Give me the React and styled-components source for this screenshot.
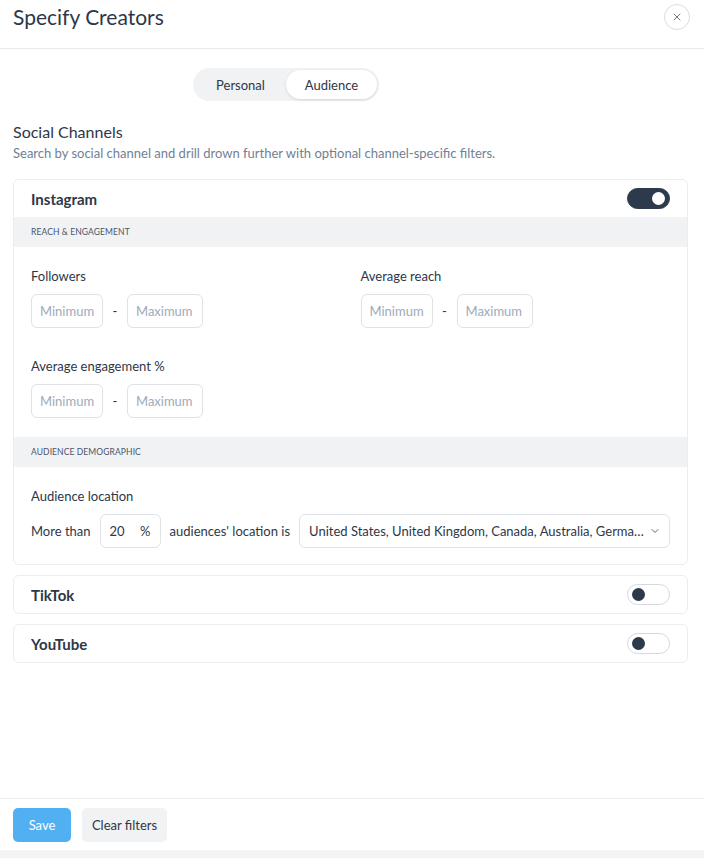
import React, { useState } from "react";
import styled, { createGlobalStyle } from "styled-components";
import { X, ChevronDown } from "lucide-react";

const GlobalStyle = createGlobalStyle`
  * { box-sizing: border-box; }
  html, body {
    margin: 0;
    padding: 0;
    background: #f3f4f5;
  }
  body {
    font-family: "Lato", "Noto Sans", sans-serif;
    color: #2d3748;
  }
`;

const channels = [
  { name: "Instagram", enabled: true },
  { name: "TikTok", enabled: false },
  { name: "YouTube", enabled: false },
];

const RangeField = ({ label }) => (
  <Field>
    <FieldLabel>{label}</FieldLabel>
    <RangeRow>
      <TextInput placeholder="Minimum" $width={72} />
      <Dash>-</Dash>
      <TextInput placeholder="Maximum" $width={76} />
    </RangeRow>
  </Field>
);

const Toggle = ({ on, onClick }) => (
  <Switch $on={on} onClick={onClick}>
    <Knob $on={on} />
  </Switch>
);

const App = () => {
  const [tab, setTab] = useState("Audience");
  const [state, setState] = useState(channels);

  const flip = (name) =>
    setState((list) =>
      list.map((c) => (c.name === name ? { ...c, enabled: !c.enabled } : c))
    );

  return (
    <>
      <GlobalStyle />
      <Modal>
        <Header>
          <Title>Specify Creators</Title>
          <CloseButton>
            <X size={12} strokeWidth={1.6} />
          </CloseButton>
        </Header>

        <Content>
          <TabsWrap>
            <Tabs>
              {["Personal", "Audience"].map((t) => (
                <Tab key={t} $active={tab === t} onClick={() => setTab(t)}>
                  {t}
                </Tab>
              ))}
            </Tabs>
          </TabsWrap>

          <SectionTitle>Social Channels</SectionTitle>
          <SectionText>
            Search by social channel and drill drown further with optional
            channel-specific filters.
          </SectionText>

          <Cards>
            {state.map((c) => (
              <Card key={c.name}>
                <CardHead>
                  <ChannelName>{c.name}</ChannelName>
                  <Toggle on={c.enabled} onClick={() => flip(c.name)} />
                </CardHead>
                {c.enabled && (
                  <>
                    <GroupHead>Reach &amp; Engagement</GroupHead>
                    <GroupBody>
                      <FieldGrid>
                        <RangeField label="Followers" />
                        <RangeField label="Average reach" />
                        <RangeField label="Average engagement %" />
                      </FieldGrid>
                    </GroupBody>
                    <GroupHead>Audience Demographic</GroupHead>
                    <GroupBody $last>
                      <Field>
                        <FieldLabel>Audience location</FieldLabel>
                        <InlineRow>
                          <InlineText>More than</InlineText>
                          <PercentBox>
                            <span>20</span>
                            <span>%</span>
                          </PercentBox>
                          <InlineText>audiences' location is</InlineText>
                          <Select>
                            <SelectValue>
                              United States, United Kingdom, Canada, Australia,
                              Germany, France, Spain
                            </SelectValue>
                            <ChevronDown size={12} strokeWidth={1.5} />
                          </Select>
                        </InlineRow>
                      </Field>
                    </GroupBody>
                  </>
                )}
              </Card>
            ))}
          </Cards>
        </Content>

        <Footer>
          <SaveButton>Save</SaveButton>
          <ClearButton>Clear filters</ClearButton>
        </Footer>
      </Modal>
    </>
  );
};

export default App;

const Modal = styled.div`
  width: 704px;
  height: 850px;
  background: #fff;
  display: flex;
  flex-direction: column;
`;

const Header = styled.div`
  display: flex;
  align-items: center;
  justify-content: space-between;
  padding: 4px 14px 18px 13px;
  border-bottom: 1px solid #e9eaec;
`;

const Title = styled.h1`
  margin: 0;
  font-size: 21px;
  font-weight: 400;
  line-height: 26px;
  color: #2d3748;
`;

const CloseButton = styled.button`
  width: 26px;
  height: 26px;
  border-radius: 50%;
  border: 1px solid #d9dce0;
  background: #fff;
  color: #4a5568;
  display: flex;
  align-items: center;
  justify-content: center;
  padding: 0;
  cursor: pointer;
`;

const Content = styled.div`
  flex: 1;
  padding: 0 16px 0 13px;
`;

const TabsWrap = styled.div`
  display: flex;
  padding: 19px 0 0 180px;
`;

const Tabs = styled.div`
  display: flex;
  padding: 2px;
  background: #f1f2f4;
  border-radius: 17px;
`;

const Tab = styled.button`
  width: 91px;
  height: 29px;
  border: none;
  border-radius: 15px;
  font-family: inherit;
  font-size: 13px;
  color: #2d3748;
  cursor: pointer;
  background: ${(p) => (p.$active ? "#fff" : "transparent")};
  box-shadow: ${(p) => (p.$active ? "0 1px 3px rgba(0,0,0,0.12)" : "none")};
`;

const SectionTitle = styled.h2`
  margin: 21px 0 0;
  font-size: 16px;
  font-weight: 400;
  line-height: 20px;
  color: #2d3748;
`;

const SectionText = styled.p`
  margin: 2px 0 0;
  font-size: 13px;
  line-height: 18px;
  color: #718096;
`;

const Cards = styled.div`
  display: flex;
  flex-direction: column;
  gap: 10px;
  margin-top: 17px;
`;

const Card = styled.div`
  border: 1px solid #ebedef;
  border-radius: 6px;
  overflow: hidden;
  background: #fff;
`;

const CardHead = styled.div`
  display: flex;
  align-items: center;
  justify-content: space-between;
  height: 37px;
  padding: 0 17px;
`;

const ChannelName = styled.div`
  font-size: 15px;
  font-weight: 700;
  color: #2d3748;
`;

const Switch = styled.div`
  width: 43px;
  height: 21px;
  border-radius: 11px;
  display: flex;
  align-items: center;
  padding: 0 4px;
  cursor: pointer;
  justify-content: ${(p) => (p.$on ? "flex-end" : "flex-start")};
  background: ${(p) => (p.$on ? "#2d3a4b" : "#fff")};
  border: 1px solid ${(p) => (p.$on ? "#2d3a4b" : "#d5d8dc")};
`;

const Knob = styled.div`
  width: 13px;
  height: 13px;
  border-radius: 50%;
  background: ${(p) => (p.$on ? "#fff" : "#2d3a4b")};
`;

const GroupHead = styled.div`
  height: 30px;
  display: flex;
  align-items: center;
  padding: 0 17px;
  background: #f1f2f4;
  font-size: 8.5px;
  text-transform: uppercase;
  letter-spacing: 0.1px;
  color: #4a5568;
`;

const GroupBody = styled.div`
  padding: ${(p) => (p.$last ? "20px 17px 16px" : "20px 17px 19px")};
`;

const FieldGrid = styled.div`
  display: grid;
  grid-template-columns: 1fr 1fr;
  column-gap: 20px;
  row-gap: 29px;
`;

const Field = styled.div`
  display: flex;
  flex-direction: column;
  gap: 9px;
`;

const FieldLabel = styled.div`
  font-size: 13px;
  line-height: 18px;
  color: #2d3748;
`;

const RangeRow = styled.div`
  display: flex;
  align-items: center;
`;

const TextInput = styled.input`
  width: ${(p) => p.$width}px;
  height: 34px;
  padding: 0 8px;
  border: 1px solid #dfe2e6;
  border-radius: 6px;
  font-family: inherit;
  font-size: 13px;
  color: #2d3748;
  outline: none;
  &::placeholder {
    color: #a0aab8;
  }
`;

const Dash = styled.span`
  width: 24px;
  text-align: center;
  font-size: 13px;
  color: #2d3748;
`;

const InlineRow = styled.div`
  display: flex;
  align-items: center;
  gap: 9px;
`;

const InlineText = styled.span`
  font-size: 13px;
  color: #2d3748;
  white-space: nowrap;
`;

const PercentBox = styled.div`
  width: 61px;
  height: 34px;
  border: 1px solid #dfe2e6;
  border-radius: 6px;
  display: flex;
  align-items: center;
  justify-content: space-between;
  padding: 0 9px 0 9px;
  font-size: 13px;
  color: #2d3748;
`;

const Select = styled.div`
  flex: 1;
  min-width: 0;
  height: 34px;
  border: 1px solid #dfe2e6;
  border-radius: 6px;
  display: flex;
  align-items: center;
  gap: 4px;
  padding: 0 8px 0 9px;
  font-size: 13px;
  color: #2d3748;
`;

const SelectValue = styled.span`
  flex: 1;
  min-width: 0;
  overflow: hidden;
  white-space: nowrap;
  text-overflow: ellipsis;
`;

const Footer = styled.div`
  display: flex;
  gap: 11px;
  padding: 9px 13px 8px;
  border-top: 1px solid #ededef;
`;

const BaseButton = styled.button`
  height: 34px;
  border: none;
  border-radius: 5px;
  font-family: inherit;
  font-size: 13px;
  cursor: pointer;
  padding: 0 9px;
`;

const SaveButton = styled(BaseButton)`
  width: 58px;
  background: #51b0f2;
  color: #fff;
`;

const ClearButton = styled(BaseButton)`
  width: 85px;
  background: #f1f2f4;
  color: #2d3748;
`;
